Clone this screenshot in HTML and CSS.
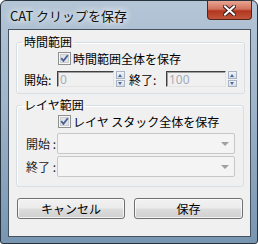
FILE: index.html
```html
<!DOCTYPE html>
<html>
<head>
    <meta charset="utf-8">
    <link rel="stylesheet" href="styles.css">
</head>
<body>
    <div class="window">
        <div class="titlebar">
            <span class="title">CAT クリップを保存</span>
            <div class="close">
                <svg width="13" height="11" viewBox="0 0 13 11">
                    <path d="M2 1.5 L11 9.5 M11 1.5 L2 9.5" stroke="#3a2020" stroke-width="4" stroke-linecap="square"/>
                    <path d="M2 1.5 L11 9.5 M11 1.5 L2 9.5" stroke="#fff" stroke-width="2" stroke-linecap="square"/>
                </svg>
            </div>
        </div>

        <form class="client" id="clip">
            <fieldset class="group time">
                <legend>時間範囲</legend>
                <label class="check">
                    <span class="box">
                        <svg width="13" height="13" viewBox="0 0 13 13">
                            <rect x="0.5" y="0.5" width="12" height="12" fill="#f6f6f6" stroke="#8e8f8f"/>
                            <rect x="2.5" y="2.5" width="8" height="8" fill="#dfe2e6" stroke="#c9ccd0"/>
                            <path d="M3.2 6.2 L5.4 8.8 L9.8 3.2" fill="none" stroke="#4a5f93" stroke-width="1.8"/>
                        </svg>
                    </span>
                    時間範囲全体を保存
                </label>
                <div class="range">
                    <span class="lbl">開始:</span>
                    <div class="spin">
                        <input type="text" value="0" disabled>
                        <span class="arrows"><i class="up"></i><i class="down"></i></span>
                    </div>
                    <span class="lbl end">終了:</span>
                    <div class="spin wide">
                        <input type="text" value="100" disabled>
                        <span class="arrows"><i class="up"></i><i class="down"></i></span>
                    </div>
                </div>
            </fieldset>

            <fieldset class="group layer">
                <legend>レイヤ範囲</legend>
                <label class="check">
                    <span class="box">
                        <svg width="13" height="13" viewBox="0 0 13 13">
                            <rect x="0.5" y="0.5" width="12" height="12" fill="#f6f6f6" stroke="#8e8f8f"/>
                            <rect x="2.5" y="2.5" width="8" height="8" fill="#dfe2e6" stroke="#c9ccd0"/>
                            <path d="M3.2 6.2 L5.4 8.8 L9.8 3.2" fill="none" stroke="#4a5f93" stroke-width="1.8"/>
                        </svg>
                    </span>
                    レイヤ スタック全体を保存
                </label>
                <div class="pick">
                    <span class="lbl">開始 :</span>
                    <div class="combo"><span class="tri"></span></div>
                </div>
                <div class="pick">
                    <span class="lbl">終了 :</span>
                    <div class="combo"><span class="tri"></span></div>
                </div>
            </fieldset>

            <div class="buttons">
                <button type="button" class="cancel">キャンセル</button>
                <button type="button" class="save">保存</button>
            </div>
        </form>
    </div>
</body>
</html>
```

FILE: styles.css
```css
body {
    margin: 0;
    background: #fff;
    font-family: "Noto Sans CJK JP", sans-serif;
    font-size: 12px;
    color: #000;
}

.window {
    width: 258px;
    height: 244px;
    box-sizing: border-box;
    border: 1px solid #27333f;
    border-radius: 6px 6px 3px 3px;
    background: linear-gradient(#b4c5d6, #a0b6cb 40%, #7895b1);
    padding: 0 6px 6px 7px;
    display: flex;
    flex-direction: column;
}

.titlebar {
    height: 28px;
    display: flex;
    align-items: flex-start;
    flex: none;
}

.title {
    padding: 6px 0 0 2px;
    line-height: 18px;
    font-size: 13px;
    color: #111;
    text-shadow: 0 0 6px #fff, 0 0 10px #fff;
}

.close {
    margin-left: auto;
    margin-right: -1px;
    width: 45px;
    height: 19px;
    box-sizing: border-box;
    border: 1px solid #5a2318;
    border-top: none;
    border-radius: 0 0 4px 4px;
    background: linear-gradient(#e8a493, #d1725d 45%, #b2361f 55%, #c0553b);
    display: flex;
    align-items: center;
    justify-content: center;
}

.client {
    flex: 1;
    margin: 0;
    border: 1px solid #45525f;
    background: #f0f0f0;
    padding: 1px 6px 0 7px;
    display: flex;
    flex-direction: column;
}

.group {
    margin: 0;
    border: 1px solid #d5dfe5;
    border-radius: 3px;
    box-shadow: inset 1px 1px 0 #fff;
    padding: 0 7px;
}

.group legend {
    margin-left: -2px;
    padding: 0 2px;
    line-height: 22px;
    font-size: 12px;
}

.time {
    padding-bottom: 6px;
}

.layer {
    padding-bottom: 9px;
}

.check {
    display: flex;
    align-items: center;
    height: 13px;
    margin-top: -1px;
    padding-left: 34px;
    line-height: 13px;
}

.box {
    display: flex;
    margin-right: 2px;
}

.range {
    display: flex;
    align-items: center;
    margin-top: 6px;
    height: 16px;
}

.lbl {
    width: 33px;
    flex: none;
}

.lbl.end {
    width: 37px;
    margin-left: 4px;
}

.spin {
    display: flex;
    align-items: stretch;
    height: 16px;
}

.spin input {
    width: 57px;
    height: 16px;
    box-sizing: border-box;
    margin: 0;
    padding: 0 2px;
    border: 1px solid;
    border-color: #404040 #e3e3e3 #e3e3e3 #404040;
    box-shadow: inset 1px 1px 0 #a0a0a0;
    background: #f0f0f0;
    font-family: "Noto Sans", sans-serif;
    font-size: 12px;
    color: #a3adbb;
}

.spin.wide input {
    width: 60px;
}

.arrows {
    display: flex;
    flex-direction: column;
    width: 9px;
    margin-left: 2px;
    gap: 1px;
}

.arrows i {
    flex: 1;
    position: relative;
    border: 1px solid #a9b5c4;
    background: linear-gradient(#f1f4f8, #d5dde8);
}

.arrows i::after {
    content: "";
    position: absolute;
    left: 1px;
    top: 2px;
    border-left: 2.5px solid transparent;
    border-right: 2.5px solid transparent;
}

.arrows .up::after {
    border-bottom: 3px solid #4e6a9a;
}

.arrows .down::after {
    top: 1px;
    border-top: 3px solid #4e6a9a;
}

.pick {
    display: flex;
    align-items: center;
    height: 21px;
    margin-top: 2px;
}

.pick:first-of-type {
    margin-top: 5px;
}

.pick .lbl {
    width: 32px;
    padding-right: 1px;
    text-align: right;
    color: #222;
}

.combo {
    width: 178px;
    height: 21px;
    box-sizing: border-box;
    border: 1px solid #c7c7c7;
    border-radius: 2px;
    background: #f4f4f4;
    display: flex;
    align-items: center;
    justify-content: flex-end;
    padding-right: 5px;
}

.tri {
    border-left: 4px solid transparent;
    border-right: 4px solid transparent;
    border-top: 4px solid #a0a0a0;
}

.buttons {
    display: flex;
    gap: 9px;
    margin-top: 11px;
    padding: 0 1px 0 1px;
}

.buttons button {
    width: 108px;
    height: 21px;
    margin: 0;
    padding: 0;
    border: 1px solid #707070;
    border-radius: 3px;
    background: linear-gradient(#f2f2f2, #ebebeb 48%, #dddddd 52%, #cfcfcf);
    box-shadow: inset 0 0 0 1px rgba(255, 255, 255, 0.7);
    font-family: inherit;
    font-size: 12px;
    color: #000;
}

.buttons .save {
    width: 109px;
}
```
